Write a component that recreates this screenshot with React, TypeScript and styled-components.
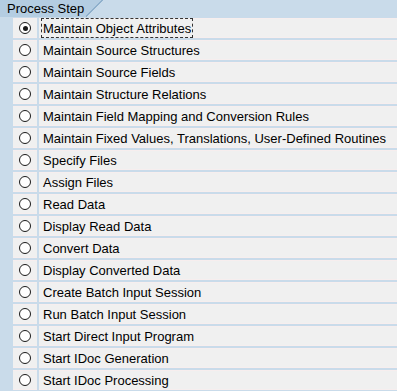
import React from "react";
import styled, { createGlobalStyle } from "styled-components";

const Global = createGlobalStyle`
  html, body { margin: 0; padding: 0; background: #c9dbea; }
  body { font-family: "Liberation Sans", Arial, sans-serif; }
`;

const steps = [
  "Maintain Object Attributes",
  "Maintain Source Structures",
  "Maintain Source Fields",
  "Maintain Structure Relations",
  "Maintain Field Mapping and Conversion Rules",
  "Maintain Fixed Values, Translations, User-Defined Routines",
  "Specify Files",
  "Assign Files",
  "Read Data",
  "Display Read Data",
  "Convert Data",
  "Display Converted Data",
  "Create Batch Input Session",
  "Run Batch Input Session",
  "Start Direct Input Program",
  "Start IDoc Generation",
  "Start IDoc Processing",
];

const Page = styled.div`
  width: 397px;
  height: 391px;
  overflow: hidden;
  background: #c9dbea;
  display: flex;
  flex-direction: column;
`;

const HeaderBar = styled.div`
  height: 17px;
  display: flex;
  align-items: stretch;
`;

const Tab = styled.div`
  position: relative;
  width: 86px;
  background: #b4cde2;
  color: #000;
  font-size: 13px;
  line-height: 18px;
  padding-left: 7px;
  box-sizing: border-box;
  white-space: nowrap;
  &::after {
    content: "";
    position: absolute;
    top: 0;
    right: -17px;
    width: 17px;
    height: 17px;
    background: linear-gradient(to top left, transparent 48%, #8fb0cc 48%, #8fb0cc 55%, transparent 55%),
      linear-gradient(to top left, transparent 50%, #b4cde2 50%);
  }
`;

const List = styled.div`
  display: flex;
  flex-direction: column;
  gap: 2px;
  padding-top: 1px;
`;

const Row = styled.div`
  display: grid;
  grid-template-columns: 24px 1fr;
  column-gap: 2px;
  height: 20px;
  padding-left: 13px;
`;

const RadioCell = styled.div`
  background: #f0f0f0;
  display: flex;
  align-items: center;
  justify-content: center;
  box-shadow: inset 0 1px 0 #f7eeee, inset 0 -1px 0 #f7eeee;
`;

const Radio = styled.span<{ $on: boolean }>`
  width: 12px;
  height: 12px;
  box-sizing: border-box;
  border: 1.6px solid #1a1a1a;
  border-radius: 50%;
  background: #fff;
  display: flex;
  align-items: center;
  justify-content: center;
  &::after {
    content: "";
    width: 5px;
    height: 5px;
    border-radius: 50%;
    background: ${(p) => (p.$on ? "#1a1a1a" : "transparent")};
  }
`;

const TextCell = styled.div`
  background: #f0f0f0;
  display: flex;
  align-items: center;
  padding-left: 2px;
  box-shadow: inset 0 1px 0 #f7eeee, inset 0 -1px 0 #f7eeee;
`;

const Label = styled.span<{ $focus: boolean }>`
  font-size: 13px;
  line-height: 17px;
  padding: 1px 1px 0;
  color: #000;
  white-space: nowrap;
  border: 1px dashed ${(p) => (p.$focus ? "#333" : "transparent")};
`;

export default function App() {
  return (
    <Page>
      <Global />
      <HeaderBar>
        <Tab>Process Step</Tab>
      </HeaderBar>
      <List>
        {steps.map((s, i) => (
          <Row key={s}>
            <RadioCell>
              <Radio $on={i === 0} />
            </RadioCell>
            <TextCell>
              <Label $focus={i === 0}>{s}</Label>
            </TextCell>
          </Row>
        ))}
      </List>
    </Page>
  );
}
